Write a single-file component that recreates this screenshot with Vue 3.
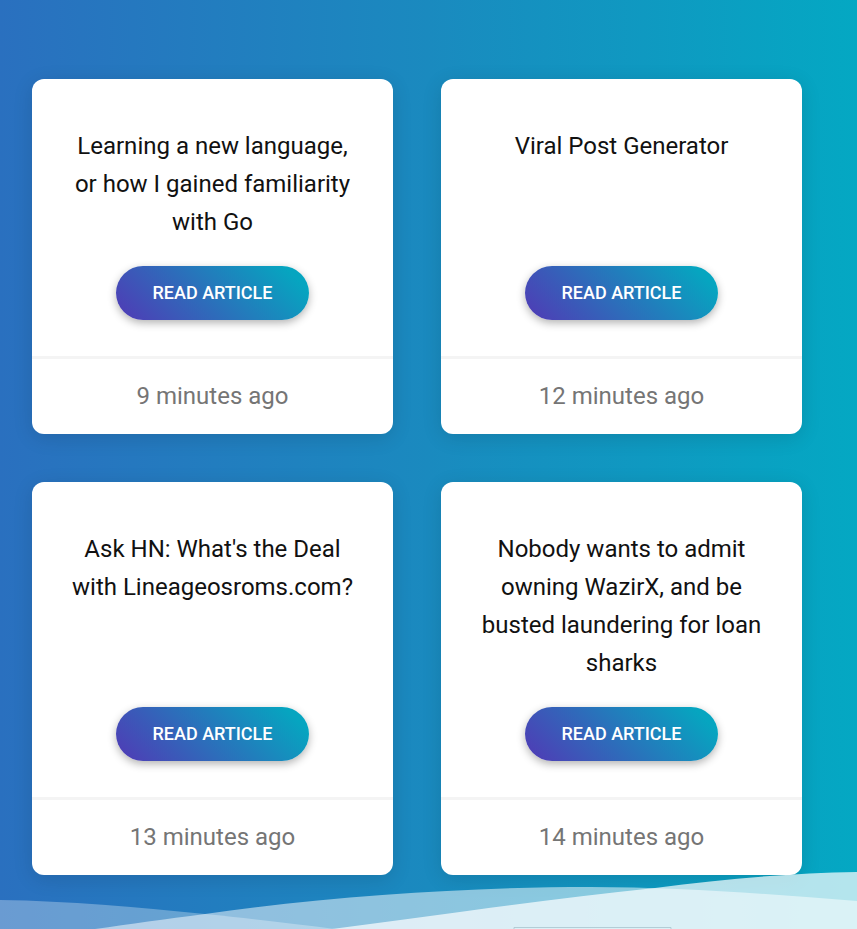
<script setup>
const articles = [
  { title: 'Learning a new language, or how I gained familiarity with Go', age: '9 minutes ago' },
  { title: 'Viral Post Generator', age: '12 minutes ago' },
  { title: "Ask HN: What's the Deal with Lineageosroms.com?", age: '13 minutes ago' },
  { title: 'Nobody wants to admit owning WazirX, and be busted laundering for loan sharks', age: '14 minutes ago' },
]
</script>

<template>
  <main class="page">
    <section class="grid">
      <article v-for="article in articles" :key="article.title" class="card">
        <div class="body">
          <h2 class="title">{{ article.title }}</h2>
          <a class="read" href="#">Read article</a>
        </div>
        <footer class="age">{{ article.age }}</footer>
      </article>
    </section>
    <svg class="waves" viewBox="0 0 857 58" preserveAspectRatio="none" aria-hidden="true">
      <path fill="#fff" fill-opacity=".3" d="M0 29C70 30 135 36 205 43C255 48 297 53 335 58H0Z" />
      <path fill="#fff" fill-opacity=".5" d="M95 58C130 53 165 48 205 43C330 25 470 16 590 16C680 16 770 23 857 30V58Z" />
      <path fill="#fff" fill-opacity=".7" d="M332 58C365 54 398 49 430 45C510 34 580 25 655 17C725 8 790 2 857 1V58Z" />
      <path fill="none" stroke="#a9c4ce" stroke-opacity=".8" d="M514 58V56.5H671V58" />
    </svg>
  </main>
</template>

<style>
body {
  margin: 0;
}
</style>

<style scoped>
.page {
  position: relative;
  box-sizing: border-box;
  min-height: 100vh;
  padding: 79px 55px 54px 32px;
  overflow: hidden;
  background: linear-gradient(90deg, #2a70bf 0%, #1a8abf 50%, #04a8c3 100%);
  font-family: Roboto, "Liberation Sans", sans-serif;
}
.grid {
  display: grid;
  grid-template-columns: repeat(2, minmax(0, 1fr));
  gap: 48px;
}
.card {
  display: flex;
  flex-direction: column;
  border-radius: 12px;
  background: #fff;
  box-shadow: 0 4px 20px rgba(0, 0, 0, 0.12);
  text-align: center;
}
.body {
  display: flex;
  flex: 1;
  flex-direction: column;
  align-items: center;
  justify-content: space-between;
  gap: 25px;
  padding: 48px 36px 36px;
}
.title {
  margin: 0;
  color: #111;
  font-size: 24px;
  font-weight: 400;
  line-height: 38px;
}
.read {
  padding: 0 36px;
  border-radius: 27px;
  background: linear-gradient(45deg, #5139b5 0%, #06a5c0 90%);
  box-shadow: 0 3px 8px rgba(0, 0, 0, 0.3);
  color: #fff;
  font-size: 18px;
  font-weight: 500;
  line-height: 54px;
  text-decoration: none;
  text-transform: uppercase;
}
.age {
  padding: 18px 36px 19px;
  border-top: 3px solid #f4f4f4;
  color: #757575;
  font-size: 24px;
  line-height: 38px;
}
.waves {
  position: absolute;
  bottom: 0;
  left: 0;
  width: 100%;
  height: 58px;
}
</style>
